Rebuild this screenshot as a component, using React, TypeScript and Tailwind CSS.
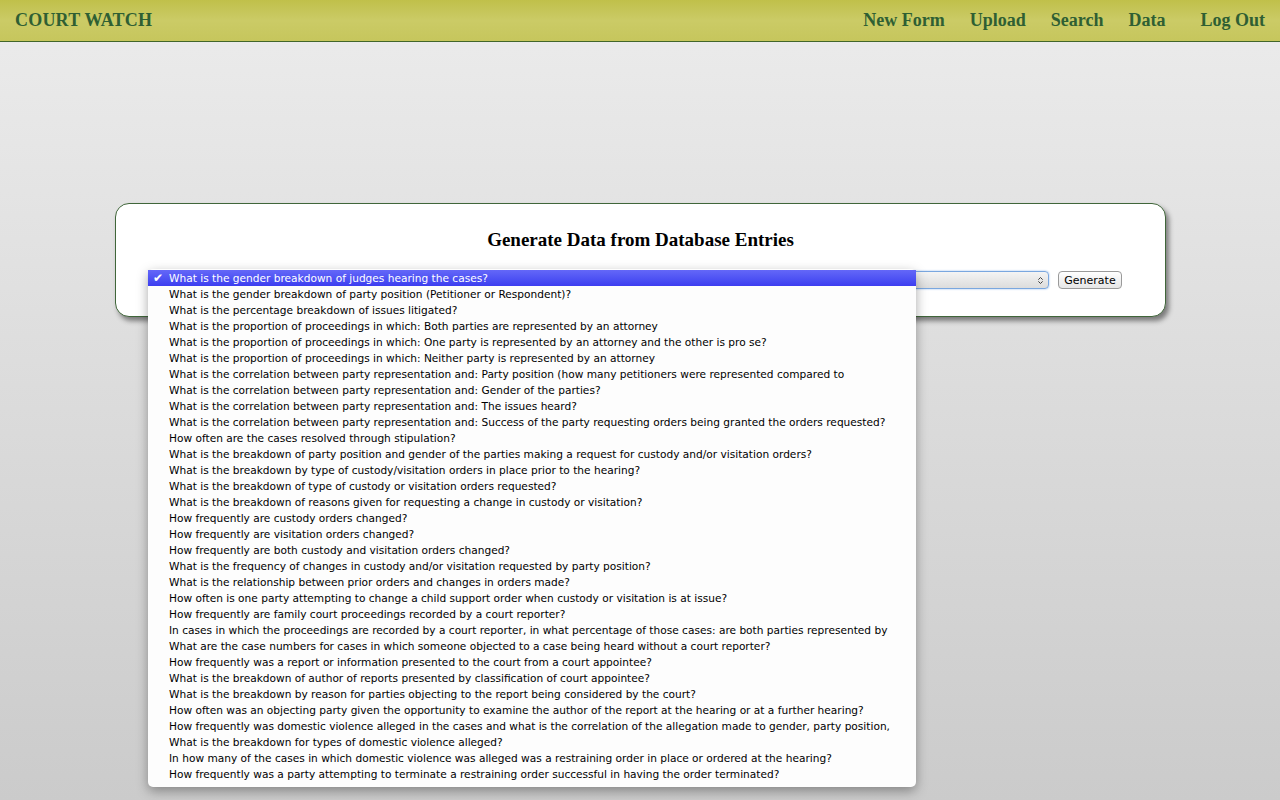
import { ChevronsUpDown } from "lucide-react";

const questions = [
  "What is the gender breakdown of judges hearing the cases?",
  "What is the gender breakdown of party position (Petitioner or Respondent)?",
  "What is the percentage breakdown of issues litigated?",
  "What is the proportion of proceedings in which: Both parties are represented by an attorney",
  "What is the proportion of proceedings in which: One party is represented by an attorney and the other is pro se?",
  "What is the proportion of proceedings in which: Neither party is represented by an attorney",
  "What is the correlation between party representation and: Party position (how many petitioners were represented compared to",
  "What is the correlation between party representation and: Gender of the parties?",
  "What is the correlation between party representation and: The issues heard?",
  "What is the correlation between party representation and: Success of the party requesting orders being granted the orders requested?",
  "How often are the cases resolved through stipulation?",
  "What is the breakdown of party position and gender of the parties making a request for custody and/or visitation orders?",
  "What is the breakdown by type of custody/visitation orders in place prior to the hearing?",
  "What is the breakdown of type of custody or visitation orders requested?",
  "What is the breakdown of reasons given for requesting a change in custody or visitation?",
  "How frequently are custody orders changed?",
  "How frequently are visitation orders changed?",
  "How frequently are both custody and visitation orders changed?",
  "What is the frequency of changes in custody and/or visitation requested by party position?",
  "What is the relationship between prior orders and changes in orders made?",
  "How often is one party attempting to change a child support order when custody or visitation is at issue?",
  "How frequently are family court proceedings recorded by a court reporter?",
  "In cases in which the proceedings are recorded by a court reporter, in what percentage of those cases: are both parties represented by",
  "What are the case numbers for cases in which someone objected to a case being heard without a court reporter?",
  "How frequently was a report or information presented to the court from a court appointee?",
  "What is the breakdown of author of reports presented by classification of court appointee?",
  "What is the breakdown by reason for parties objecting to the report being considered by the court?",
  "How often was an objecting party given the opportunity to examine the author of the report at the hearing or at a further hearing?",
  "How frequently was domestic violence alleged in the cases and what is the correlation of the allegation made to gender, party position,",
  "What is the breakdown for types of domestic violence alleged?",
  "In how many of the cases in which domestic violence was alleged was a restraining order in place or ordered at the hearing?",
  "How frequently was a party attempting to terminate a restraining order successful in having the order terminated?",
];

const navLinks = ["New Form", "Upload", "Search", "Data"];

export default function App() {
  return (
    <div className="min-h-[800px] bg-gradient-to-b from-[#ececec] to-[#cbcbcb] font-['Liberation_Serif',serif]">
      <header className="h-[42px] bg-gradient-to-b from-[#c0c04a] via-[#cbcb66] to-[#c6c65c] border-b border-[#42662a] flex items-center px-[15px] text-[#2f5f33] font-bold">
        <div className="text-[18px] tracking-[0.2px]">COURT WATCH</div>
        <nav className="ml-auto flex items-center text-[18px]">
          {navLinks.map((l) => (
            <a key={l} className="mr-[25px] cursor-pointer">
              {l}
            </a>
          ))}
          <a className="ml-[10px] cursor-pointer">Log Out</a>
        </nav>
      </header>

      <main className="pt-[161px] px-[115px] pr-[114px]">
        <div className="relative bg-white border border-[#40663a] rounded-[14px] shadow-[3px_4px_5px_rgba(0,0,0,0.45)] h-[114px] px-[33px]">
          <h1 className="text-center text-[19px] font-bold text-black pt-[24px] leading-[24px]">
            Generate Data from Database Entries
          </h1>
          <div className="flex items-center mt-[19px]">
            <div className="w-[900px] h-[18px] rounded-[4px] border border-[#7aa7df] shadow-[0_0_2px_#8bb4ea] bg-gradient-to-b from-[#f4f4f4] to-[#dcdcdc] flex items-center justify-end pr-[3px]">
              <ChevronsUpDown size={9} strokeWidth={2.5} className="text-[#333]" />
            </div>
            <button className="ml-[9px] h-[18px] w-[64px] rounded-[4px] border border-[#9a9a9a] bg-gradient-to-b from-white to-[#e6e6e6] text-[11px] text-black font-['DejaVu_Sans',sans-serif] leading-none">
              Generate
            </button>
          </div>

          <div className="absolute left-[32px] top-[65px] w-[768px] h-[518px] bg-[#fdfdfd] rounded-[5px] shadow-[0_4px_12px_rgba(0,0,0,0.35)] py-[1px] font-['DejaVu_Sans',sans-serif] text-[10.6px] text-black z-10">
            {questions.map((q, i) => (
              <div
                key={i}
                className={`h-[16px] leading-[16px] flex items-center whitespace-nowrap pr-[20px] ${
                  i === 0 ? "bg-gradient-to-b from-[#6467f8] to-[#3d3df0] text-white" : ""
                }`}
              >
                <span className="w-[21px] shrink-0 pl-[5px] text-[12px]">{i === 0 ? "✔" : ""}</span>
                <span>{q}</span>
              </div>
            ))}
          </div>
        </div>
      </main>
    </div>
  );
}
